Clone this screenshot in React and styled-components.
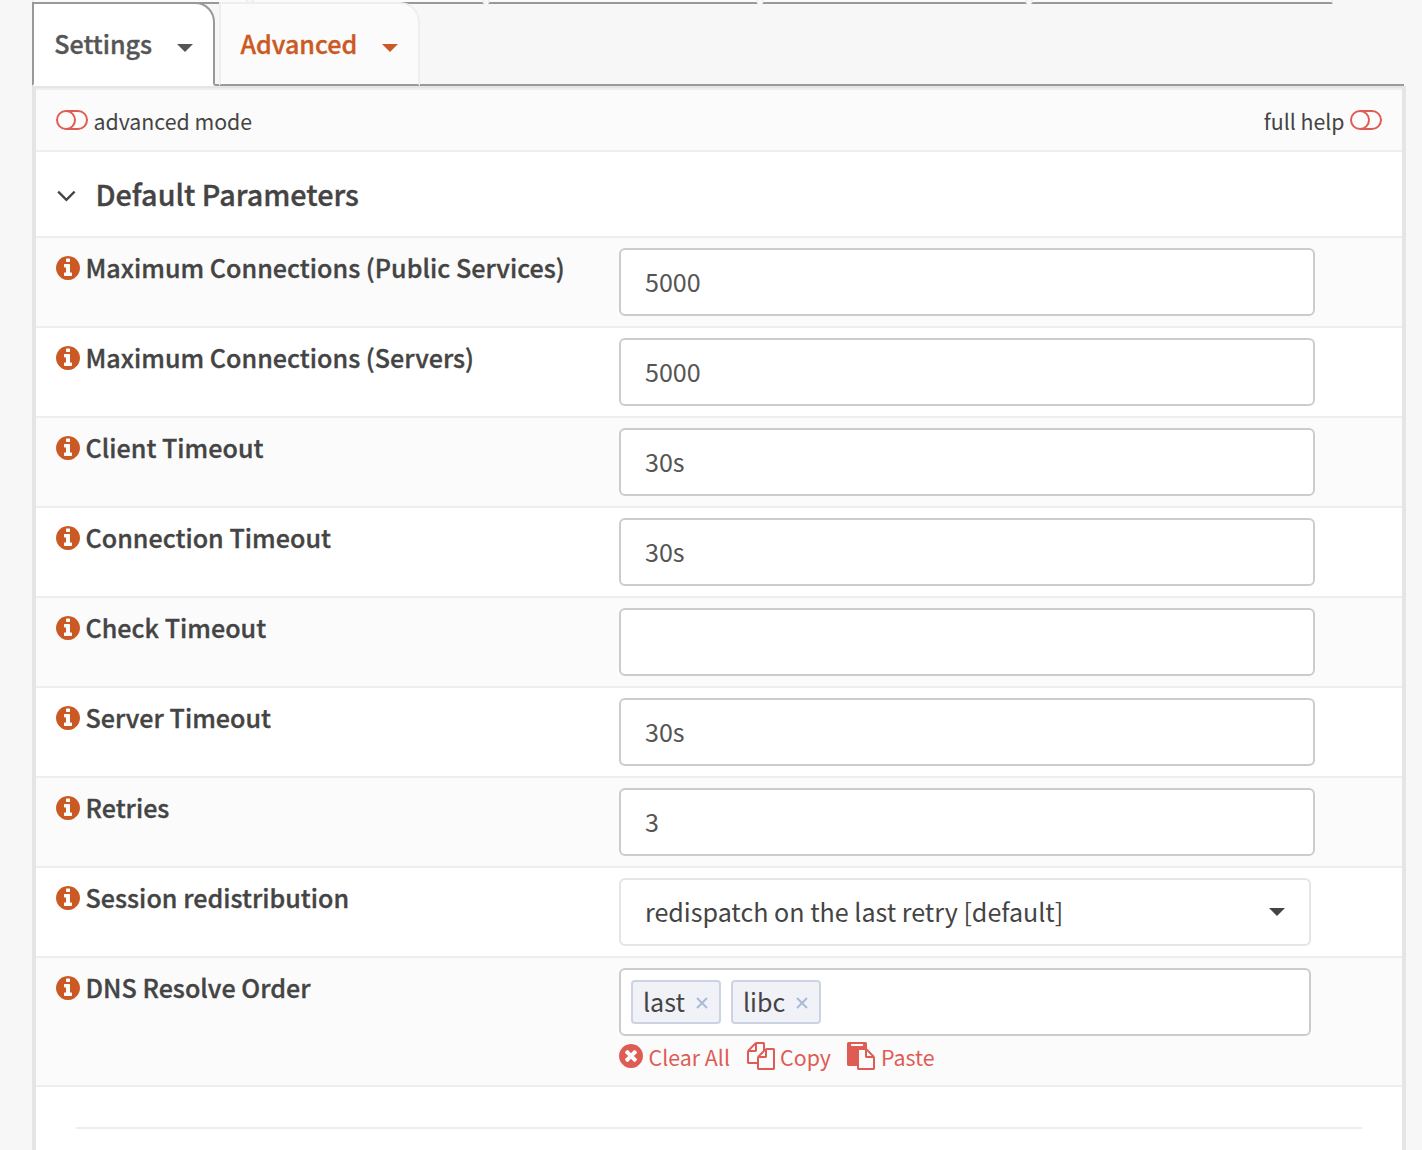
import React from 'react';
import styled, { createGlobalStyle } from 'styled-components';

const color = {
  page: '#f7f7f7',
  stripe: '#fbfbfb',
  line: '#eeeeee',
  frame: '#e5e5e5',
  tabLine: '#999999',
  text: '#444444',
  input: '#555555',
  orange: '#cb5924',
  red: '#df5c55',
};

const GlobalStyle = createGlobalStyle`
  * { box-sizing: border-box; }
  body {
    margin: 0;
    background: ${color.page};
    color: ${color.text};
    font-family: "Noto Sans CJK SC", "Open Sans", sans-serif;
    font-size: 25.07px;
  }
`;

const Page = styled.div`
  height: 1150px;
  overflow: hidden;
  padding: 0 16px 0 32px;
  display: flex;
  flex-direction: column;
`;

const UpperTabs = styled.div`
  display: flex;
  gap: 4px;
  height: 4px;
  flex: none;
`;

const UpperTab = styled.div`
  width: ${(p) => p.$width}px;
  background: ${color.stripe};
  border: 2px solid ${color.line};
  border-top: 0;
  border-bottom-color: ${color.tabLine};
`;

const TabBar = styled.div`
  display: flex;
  gap: 4px;
  height: 84px;
  flex: none;
  margin: -2px 2px 0 0;
  background: linear-gradient(${color.tabLine}, ${color.tabLine}) bottom / 100% 2px no-repeat;
`;

const Tab = styled.div`
  display: flex;
  justify-content: space-between;
  width: ${(p) => p.$width}px;
  padding: 0 20px 0 ${(p) => (p.$active ? 20.3 : 19.4)}px;
  border: 2px solid ${(p) => (p.$active ? color.tabLine : color.line)};
  border-bottom-color: ${(p) => (p.$active ? '#fff' : color.tabLine)};
  border-radius: 0 20px 0 0;
  background: ${(p) => (p.$active ? '#fff' : color.stripe)};
  color: ${(p) => (p.$active ? '#555555' : color.orange)};
  font-weight: 500;
  line-height: 78px;
  -webkit-text-stroke: 0.35px currentColor;
`;

const Caret = styled.span`
  flex: none;
  align-self: flex-start;
  margin-top: ${(p) => p.$top}px;
  border: 8px solid transparent;
  border-top-color: currentColor;
  border-bottom: 0;
`;

const Panel = styled.main`
  flex: 1;
  border: 4px solid ${color.frame};
  border-top-width: 2px;
  border-bottom: 0;
  background: #fff;
`;

const ModeBar = styled.div`
  display: flex;
  justify-content: space-between;
  height: 64px;
  padding: 20px 20px 0;
  border: solid ${color.line};
  border-width: 2px 0;
  background: ${color.stripe};
`;

const Mode = styled.div`
  display: flex;
  gap: 5.5px;
  font-size: 21.3px;
  line-height: 21px;
`;

const SectionHeader = styled.div`
  display: flex;
  align-items: flex-start;
  gap: 19.5px;
  height: 86px;
  padding: 22px 20px 0;
  border-bottom: 2px solid ${color.line};
`;

const SectionTitle = styled.h2`
  margin: 0;
  font-size: 28.75px;
  font-weight: 500;
  line-height: 40px;
  -webkit-text-stroke: 0.35px currentColor;
`;

const Row = styled.div`
  display: flex;
  min-height: 90px;
  padding: 10px 20px 8px;
  border-bottom: 2px solid ${color.line};
  background: ${(p) => (p.$striped ? color.stripe : '#fff')};
`;

const Label = styled.label`
  display: flex;
  gap: 5.5px;
  width: 563px;
  flex: none;
  font-weight: 500;
  letter-spacing: 0.035px;
  line-height: 38px;
  -webkit-text-stroke: 0.35px currentColor;
`;

const InfoSvg = styled.svg`
  width: 24px;
  height: 24px;
  margin-top: 8px;
  flex: none;
  fill: ${color.orange};
  stroke: none;
`;

const TextInput = styled.input`
  width: 696px;
  height: 68px;
  padding: 0 24px 3px;
  border: 2px solid #cccccc;
  border-radius: 6px;
  background: #fff;
  color: ${color.input};
  font: inherit;
  outline: 0;
`;

const Select = styled.div`
  display: flex;
  justify-content: space-between;
  width: 692px;
  height: 68px;
  padding: 0 24px;
  border: 2px solid ${color.frame};
  border-radius: 6px;
  background: #fff;
  line-height: 63px;
`;

const TokenField = styled.div`
  display: flex;
  gap: 10px;
  width: 692px;
  height: 68px;
  padding: 10px;
  border: 2px solid #cccccc;
  border-radius: 6px;
  background: #fff;
`;

const Token = styled.span`
  display: flex;
  justify-content: space-between;
  width: 90px;
  height: 44px;
  padding: 0 11.5px 0 10px;
  border: 2px solid #ccd4e4;
  border-radius: 4px;
  background: #f1f2f8;
  line-height: 39px;
`;

const RemoveSvg = styled.svg`
  width: 12px;
  height: 12px;
  margin-top: 14.5px;
  stroke: #a9b9da;
  stroke-width: 1.9;
`;

const Actions = styled.div`
  display: flex;
  height: 41px;
  padding-top: 6px;
  color: ${color.red};
  font-size: 21.4px;
  line-height: 30px;
`;

const Action = styled.a`
  display: flex;
  gap: 5.5px;
  margin-right: 16.5px;
`;

const ActionSvg = styled.svg`
  width: ${(p) => p.$size}px;
  height: ${(p) => p.$size}px;
  margin-top: ${(p) => (p.$size === 24 ? 2 : 0)}px;
  flex: none;
  fill: currentColor;
`;

const ChevronSvg = styled.svg`
  width: 20px;
  height: 12px;
  margin-top: 15.5px;
  fill: none;
  stroke: ${color.text};
  stroke-width: 2.3;
`;

const Divider = styled.hr`
  height: 2px;
  margin: 40px 40px 0;
  border: 0;
  background: ${color.line};
`;

const CIRCLE = 'm387-226q0 209-103 385.5t-279.5 279.5-385.5 103-385.5-103-279.5-279.5-103-385.5 103-385.5 279.5-279.5 385.5-103 385.5 103 279.5 279.5 103 385.5z';

function InfoIcon() {
  return (
    <InfoSvg viewBox="128 128 1536 1536">
      <path d="M1152 1376v-160q0-14-9-23t-23-9h-96v-512q0-14-9-23t-23-9h-320q-14 0-23 9t-9 23v160q0 14 9 23t23 9h96v320h-96q-14 0-23 9t-9 23v160q0 14 9 23t23 9h448q14 0 23-9t9-23zm-128-896v-160q0-14-9-23t-23-9h-192q-14 0-23 9t-9 23v160q0 14 9 23t23 9h192q14 0 23-9t9-23zm640 416q0 209-103 385.5t-279.5 279.5-385.5 103-385.5-103-279.5-279.5-103-385.5 103-385.5 279.5-279.5 385.5-103 385.5 103 279.5 279.5 103 385.5z" />
    </InfoSvg>
  );
}

function ToggleIcon() {
  return (
    <svg width="32" height="20" viewBox="0 0 32 20" fill="none" stroke={color.red} strokeWidth="2">
      <rect x="1" y="1" width="30" height="18" rx="9" />
      <path d="M10 1a9 9 0 0 1 0 18" />
    </svg>
  );
}

const actions = [
  {
    label: 'Clear All',
    size: 24,
    box: '128 128 1536 1536',
    d: 'M1277 1122q0-26-19-45l-181-181 181-181q19-19 19-45 0-27-19-46l-90-90q-19-19-46-19-26 0-45 19l-181 181-181-181q-19-19-45-19-27 0-46 19l-90 90q-19 19-19 46 0 26 19 45l181 181-181 181q-19 19-19 45 0 27 19 46l90 90q19 19 46 19 26 0 45-19l181-181 181 181q19 19 45 19 27 0 46-19l90-90q19-19 19-46z' + CIRCLE,
  },
  {
    label: 'Copy',
    size: 28,
    box: '0 0 1792 1792',
    d: 'M1696 384q40 0 68 28t28 68v1216q0 40-28 68t-68 28h-960q-40 0-68-28t-28-68v-288h-544q-40 0-68-28t-28-68v-672q0-40 20-88t48-76l408-408q28-28 76-48t88-20h416q40 0 68 28t28 68v328q68-40 128-40h416zm-544 213l-299 299h299v-299zm-640-384l-299 299h299v-299zm196 647l316-316v-416h-384v416q0 40-28 68t-68 28h-416v640h512v-256q0-40 20-88t48-76zm956 804v-1152h-384v416q0 40-28 68t-68 28h-416v640h896z',
  },
  {
    label: 'Paste',
    size: 28,
    box: '0 0 1792 1792',
    d: 'M768 1664h896v-640h-416q-40 0-68-28t-28-68v-416h-384v1152zm256-1440v-64q0-13-9.5-22.5t-22.5-9.5h-704q-13 0-22.5 9.5t-9.5 22.5v64q0 13 9.5 22.5t22.5 9.5h704q13 0 22.5-9.5t9.5-22.5zm256 672h299l-299-299v299zm512 128v672q0 40-28 68t-68 28h-960q-40 0-68-28t-28-68v-160h-544q-40 0-68-28t-28-68v-1344q0-40 28-68t68-28h1088q40 0 68 28t28 68v328q21 13 36 28l408 408q28 28 48 76t20 88z',
  },
];

const fields = [
  ['Maximum Connections (Public Services)', '5000'],
  ['Maximum Connections (Servers)', '5000'],
  ['Client Timeout', '30s'],
  ['Connection Timeout', '30s'],
  ['Check Timeout', ''],
  ['Server Timeout', '30s'],
  ['Retries', '3'],
];

function Field({ label, striped, children }) {
  return (
    <Row $striped={striped}>
      <Label>
        <InfoIcon />
        <span>{label}</span>
      </Label>
      <div>{children}</div>
    </Row>
  );
}

export default function App() {
  return (
    <Page>
      <GlobalStyle />
      <UpperTabs>
        {[216, 232, 270, 265, 302].map((w) => (
          <UpperTab key={w} $width={w} />
        ))}
      </UpperTabs>
      <TabBar>
        <Tab $active $width={183}>
          Settings
          <Caret $top={40} />
        </Tab>
        <Tab $width={201}>
          Advanced
          <Caret $top={40} />
        </Tab>
      </TabBar>
      <Panel>
        <ModeBar>
          <Mode>
            <ToggleIcon />
            advanced mode
          </Mode>
          <Mode>
            full help
            <ToggleIcon />
          </Mode>
        </ModeBar>
        <SectionHeader>
          <ChevronSvg viewBox="0 0 20 12">
            <path d="M2.2 1.6 10.4 9.8 18.6 1.6" />
          </ChevronSvg>
          <SectionTitle>Default Parameters</SectionTitle>
        </SectionHeader>
        {fields.map(([label, value], i) => (
          <Field key={label} label={label} striped={i % 2 === 0}>
            <TextInput defaultValue={value} />
          </Field>
        ))}
        <Field label="Session redistribution">
          <Select>
            redispatch on the last retry [default]
            <Caret $top={28} />
          </Select>
        </Field>
        <Field label="DNS Resolve Order" striped>
          <TokenField>
            {['last', 'libc'].map((name) => (
              <Token key={name}>
                {name}
                <RemoveSvg viewBox="0 0 12 12">
                  <path d="M1 1 11 11M11 1 1 11" />
                </RemoveSvg>
              </Token>
            ))}
          </TokenField>
          <Actions>
            {actions.map((a) => (
              <Action key={a.label}>
                <ActionSvg $size={a.size} viewBox={a.box}>
                  <path d={a.d} />
                </ActionSvg>
                {a.label}
              </Action>
            ))}
          </Actions>
        </Field>
        <Divider />
      </Panel>
    </Page>
  );
}
